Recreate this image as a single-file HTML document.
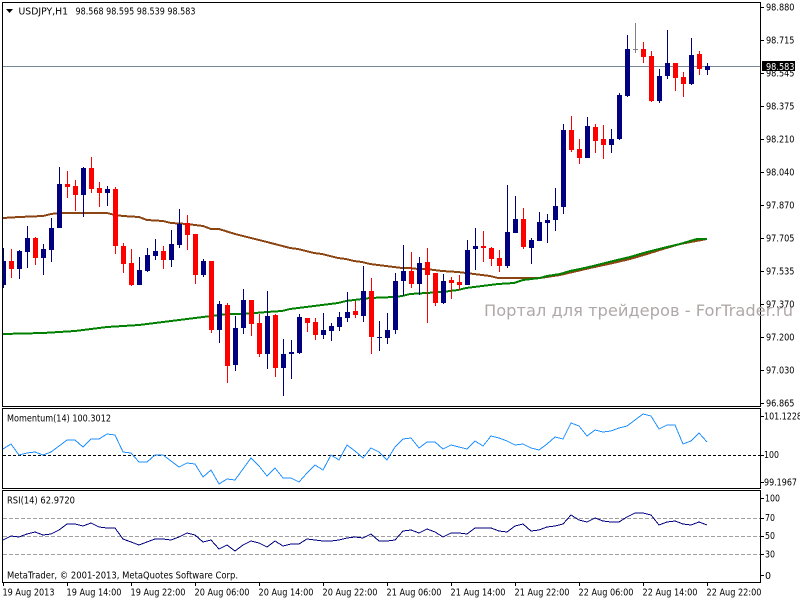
<!DOCTYPE html>
<html><head><meta charset="utf-8"><title>USDJPY,H1</title>
<style>
html,body{margin:0;padding:0;background:#fff;width:800px;height:600px;overflow:hidden}
svg{display:block;position:absolute;left:0;top:0}
text{font-family:"DejaVu Sans","Liberation Sans","Noto Sans CJK JP",sans-serif;font-size:9.5px;fill:#000}
.c{shape-rendering:crispEdges;fill:none}
</style></head><body>
<svg width="800" height="600" viewBox="0 0 800 600" xmlns="http://www.w3.org/2000/svg">
<defs><clipPath id="cl"><rect x="3" y="3" width="757" height="403"/></clipPath></defs>
<rect width="800" height="600" fill="#fff"/>
<!-- price line -->
<path class="c" d="M3 66.5H760" stroke="#778899"/>
<!-- moving averages -->
<polyline class="c" stroke="#8B4513" stroke-width="2" points="3,218 19,217 43,216 51,214 59,213 107,213 115,215 123,216 139,217 147,220 163,221 171,223 187,224 203,226 211,229 219,229 235,234 243,236 251,238 267,242 290,248 298,249 306,251 314,253 322,254 338,258 346,259 354,261 362,262 370,264 378,265 386,266 394,267 402,268 410,268 418,269 426,269 434,270 442,271 458,272 466,273 474,274 490,276 498,278 540,278 560,275 590,268 613,263 630,259 647,254 663,249 680,244 707,239"/>
<polyline class="c" stroke="#008000" stroke-width="2" points="3,334 43,333 59,332 75,331 83,330 91,329 99,328 107,327 123,326 139,325 147,324 155,323 171,321 179,320 187,319 203,317 219,315 227,314 243,314 267,312 282,311 290,309 298,308 306,307 314,306 322,305 330,304 338,303 346,301 354,300 370,298 394,297 402,296 410,294 426,293 442,292 458,290 466,288 474,287 490,285 498,284 514,283 523,280 540,278 547,276 560,274 570,271 580,269 593,266 613,261 630,257 647,252 663,248 680,244 690,241 697,239 707,239"/>
<!-- candles -->
<g clip-path="url(#cl)">
<path class="c" stroke="#000080" d="M3.5 248V288M19.5 250V279M27.5 226V268M43.5 244V275M51.5 218V262M59.5 167V228M83.5 167V217M107.5 186V206M139.5 257V285M147.5 248V272M155.5 239V260M171.5 230V267M179.5 209V248M203.5 259V277M219.5 301V343M235.5 316V371M243.5 289V334M267.5 291V369M283.5 339V396M291.5 340V379M299.5 314V354M323.5 313V339M331.5 323V341M339.5 312V331M347.5 292V322M363.5 266V322M379.5 321V351M387.5 313V344M395.5 273V334M403.5 245V296M419.5 257V295M443.5 274V304M467.5 240V285M475.5 228V270M507.5 185V268M515.5 196V233M531.5 238V264M539.5 212V241M547.5 214V243M555.5 188V231M563.5 124V214M587.5 117V158M611.5 129V153M619.5 93V140M627.5 35V97M659.5 69V103M667.5 30V79M691.5 38V85M707.5 63V75"/>
<path class="c" stroke="#000080" stroke-width="5" d="M3.5 261V285M19.5 251V269M27.5 238V252M43.5 249V258M51.5 228V250M59.5 184V228M83.5 168V195M107.5 189V193M139.5 270V285M147.5 255V271M155.5 251V256M171.5 244V260M179.5 224V245M203.5 261V275M219.5 304V330M235.5 328V365M243.5 300V328M267.5 316V354M283.5 354V368M291.5 352V354M299.5 317V353M323.5 330V335M331.5 326V331M339.5 317V327M347.5 312V318M363.5 291V316M379.5 337V338M387.5 330V338M395.5 281V330M403.5 271V281M419.5 263V284M443.5 281V303M467.5 250V285M475.5 246V249M507.5 232V266M515.5 219V233M531.5 240V248M539.5 222V241M547.5 220V223M555.5 206V220M563.5 130V207M587.5 126V158M611.5 139V145M619.5 95V139M627.5 49V96M659.5 76V101M667.5 63V76M691.5 55V84M707.5 66V70"/>
<path class="c" stroke="#ff0000" d="M11.5 249V278M35.5 237V265M67.5 171V198M75.5 180V211M91.5 157V193M99.5 182V207M115.5 187V254M123.5 243V273M131.5 249V286M163.5 246V269M187.5 215V250M195.5 234V284M211.5 261V333M227.5 303V383M251.5 300V336M259.5 314V357M275.5 314V377M307.5 318V332M315.5 318V340M355.5 301V318M371.5 278V354M411.5 252V288M427.5 248V323M435.5 273V306M451.5 277V299M459.5 275V290M483.5 231V262M491.5 247V266M499.5 250V272M523.5 208V249M571.5 116V152M579.5 139V164M595.5 124V153M603.5 125V159M643.5 42V63M651.5 51V102M675.5 63V91M683.5 72V97M699.5 51V75"/>
<path class="c" stroke="#ff0000" stroke-width="5" d="M11.5 261V269M35.5 238V258M67.5 184V187M75.5 186V195M91.5 168V189M99.5 188V193M115.5 189V246M123.5 246V264M131.5 263V285M163.5 251V260M187.5 223V235M195.5 234V275M211.5 261V330M227.5 305V366M251.5 300V324M259.5 323V354M275.5 315V368M307.5 318V323M315.5 322V335M355.5 311V315M371.5 291V337M411.5 271V284M427.5 262V275M435.5 273V303M451.5 280V283M459.5 282V285M483.5 246V248M491.5 248V259M499.5 258V266M523.5 219V247M571.5 130V150M579.5 149V158M595.5 127V141M603.5 139V145M643.5 49V57M651.5 56V101M675.5 63V78M683.5 77V84M699.5 54V69"/>
<path class="c" stroke="#808080" d="M635.5 23V53M633 49.5H638"/>
</g>
<!-- momentum -->
<path class="c" d="M3 455.5H760" stroke="#000" stroke-dasharray="3 2"/>
<polyline class="c" stroke="#1E90FF" points="3,449 11,444 19,455 27,453 35,452 43,455 51,452 59,446 67,440 75,440 83,447 91,439 99,439 107,434 115,435 123,452 131,453 139,462 147,462 155,455 163,455 171,461 179,467 187,463 195,464 203,477 211,470 219,484 227,479 235,480 243,469 251,458 259,466 267,476 275,468 283,478 291,478 299,482 307,473 315,465 323,470 331,455 339,460 347,445 355,451 363,458 371,448 379,452 387,460 395,447 403,439 411,438 419,448 427,442 435,442 443,449 451,445 459,447 467,449 475,441 483,446 491,436 499,438 507,441 515,445 523,444 531,448 539,450 547,444 555,437 563,439 571,423 579,426 587,436 595,430 603,432 611,431 619,428 627,426 635,420 643,414 651,416 659,429 667,425 675,425 683,444 691,441 699,433 707,442"/>
<!-- rsi -->
<path class="c" d="M3 518.5H760M3 536.5H760M3 554.5H760" stroke="#a0a0a0" stroke-dasharray="4 2"/>
<polyline class="c" stroke="#000080" points="3,540 11,536 19,537 27,534 35,532 43,535 51,534 59,530 67,524 75,524 83,526 91,523 99,527 107,528 115,528 123,539 131,542 139,545 147,542 155,539 163,539 171,540 179,537 187,533 195,535 203,542 211,540 219,549 227,545 235,551 243,545 251,541 259,543 267,547 275,541 283,546 291,544 299,544 307,539 315,540 323,541 331,541 339,540 347,538 355,537 363,538 371,534 379,541 387,541 395,540 403,531 411,530 419,533 427,529 435,532 443,537 451,533 459,533 467,534 475,528 483,528 491,528 499,531 507,532 515,526 523,524 531,531 539,530 547,527 555,526 563,524 571,515 579,520 587,522 595,518 603,521 611,522 619,522 627,517 635,513 643,513 651,515 659,525 667,522 675,521 683,524 691,525 699,522 707,525"/>
<!-- frames -->
<path class="c" stroke="#000" d="M2 2.5H761M2.5 2V407M760.5 2V407M2 406.5H761M2 408.5H761M2.5 408V489M760.5 408V489M2 488.5H761M2 490.5H761M2.5 490V583M760.5 490V583M2 582.5H761"/>
<!-- y ticks -->
<path class="c" stroke="#000" d="M761 7.5h3M761 40.5h3M761 73.5h3M761 106.5h3M761 139.5h3M761 172.5h3M761 205.5h3M761 238.5h3M761 271.5h3M761 304.5h3M761 337.5h3M761 370.5h3M761 403.5h3M761 416.5h3M761 455.5h3M761 482.5h3M761 498.5h3M761 518.5h3M761 536.5h3M761 554.5h3M761 575.5h3"/>
<!-- x ticks -->
<path class="c" stroke="#000" d="M3.5 583V586M67.5 583V586M131.5 583V586M195.5 583V586M259.5 583V586M323.5 583V586M387.5 583V586M451.5 583V586M515.5 583V586M579.5 583V586M643.5 583V586M707.5 583V586"/>
<!-- header -->
<path d="M6 9H13L9.500 13Z" fill="#000"/>
<text x="18.500" y="14.500" textLength="49.500" lengthAdjust="spacingAndGlyphs">USDJPY,H1</text>
<text x="75.500" y="14.500" textLength="120" lengthAdjust="spacingAndGlyphs">98.568 98.595 98.539 98.583</text>
<text x="7" y="421.500" textLength="104" lengthAdjust="spacingAndGlyphs">Momentum(14) 100.3012</text>
<text x="7" y="503.500" textLength="68" lengthAdjust="spacingAndGlyphs">RSI(14) 62.9720</text>
<text x="7" y="578.500" textLength="231" lengthAdjust="spacingAndGlyphs">MetaTrader, © 2001-2013, MetaQuotes Software Corp.</text>
<!-- watermark -->
<text x="484" y="316" textLength="309" lengthAdjust="spacingAndGlyphs" style="font-size:16px;fill:#b0a8a8">Портал для трейдеров - ForTrader.ru</text>
<!-- price axis -->
<g>
<text x="766" y="10.500" textLength="28.500" lengthAdjust="spacingAndGlyphs">98.880</text>
<text x="766" y="43.500" textLength="28.500" lengthAdjust="spacingAndGlyphs">98.715</text>
<text x="766" y="76.500" textLength="28.500" lengthAdjust="spacingAndGlyphs">98.545</text>
<text x="766" y="109.500" textLength="28.500" lengthAdjust="spacingAndGlyphs">98.375</text>
<text x="766" y="142.500" textLength="28.500" lengthAdjust="spacingAndGlyphs">98.210</text>
<text x="766" y="175.500" textLength="28.500" lengthAdjust="spacingAndGlyphs">98.040</text>
<text x="766" y="208.500" textLength="28.500" lengthAdjust="spacingAndGlyphs">97.870</text>
<text x="766" y="241.500" textLength="28.500" lengthAdjust="spacingAndGlyphs">97.705</text>
<text x="766" y="274.500" textLength="28.500" lengthAdjust="spacingAndGlyphs">97.535</text>
<text x="766" y="307.500" textLength="28.500" lengthAdjust="spacingAndGlyphs">97.370</text>
<text x="766" y="340.500" textLength="28.500" lengthAdjust="spacingAndGlyphs">97.200</text>
<text x="766" y="373.500" textLength="28.500" lengthAdjust="spacingAndGlyphs">97.030</text>
<text x="766" y="406.500" textLength="28.500" lengthAdjust="spacingAndGlyphs">96.865</text>
</g>
<rect x="762" y="61" width="33" height="10" fill="#000"/>
<text x="766" y="70" textLength="28.500" lengthAdjust="spacingAndGlyphs" style="fill:#fff">98.583</text>
<text x="764" y="419.500" textLength="38" lengthAdjust="spacingAndGlyphs">101.1228</text>
<text x="764" y="458" textLength="15" lengthAdjust="spacingAndGlyphs">100</text>
<text x="764" y="485.500" textLength="33" lengthAdjust="spacingAndGlyphs">99.1967</text>
<text x="765" y="501.500" textLength="15" lengthAdjust="spacingAndGlyphs">100</text>
<text x="765" y="521" textLength="10" lengthAdjust="spacingAndGlyphs">70</text>
<text x="765" y="539" textLength="10" lengthAdjust="spacingAndGlyphs">50</text>
<text x="765" y="557.500" textLength="10" lengthAdjust="spacingAndGlyphs">30</text>
<text x="765" y="579">0</text>
<!-- time axis -->
<g>
<text x="2.500" y="595.500" textLength="52" lengthAdjust="spacingAndGlyphs">19 Aug 2013</text>
<text x="66.500" y="595.500" textLength="55" lengthAdjust="spacingAndGlyphs">19 Aug 14:00</text>
<text x="130.500" y="595.500" textLength="55" lengthAdjust="spacingAndGlyphs">19 Aug 22:00</text>
<text x="194.500" y="595.500" textLength="55" lengthAdjust="spacingAndGlyphs">20 Aug 06:00</text>
<text x="258.500" y="595.500" textLength="55" lengthAdjust="spacingAndGlyphs">20 Aug 14:00</text>
<text x="322.500" y="595.500" textLength="55" lengthAdjust="spacingAndGlyphs">20 Aug 22:00</text>
<text x="386.500" y="595.500" textLength="55" lengthAdjust="spacingAndGlyphs">21 Aug 06:00</text>
<text x="450.500" y="595.500" textLength="55" lengthAdjust="spacingAndGlyphs">21 Aug 14:00</text>
<text x="514.500" y="595.500" textLength="55" lengthAdjust="spacingAndGlyphs">21 Aug 22:00</text>
<text x="578.500" y="595.500" textLength="55" lengthAdjust="spacingAndGlyphs">22 Aug 06:00</text>
<text x="642.500" y="595.500" textLength="55" lengthAdjust="spacingAndGlyphs">22 Aug 14:00</text>
<text x="706.500" y="595.500" textLength="55" lengthAdjust="spacingAndGlyphs">22 Aug 22:00</text>
</g>
</svg>
</body></html>
